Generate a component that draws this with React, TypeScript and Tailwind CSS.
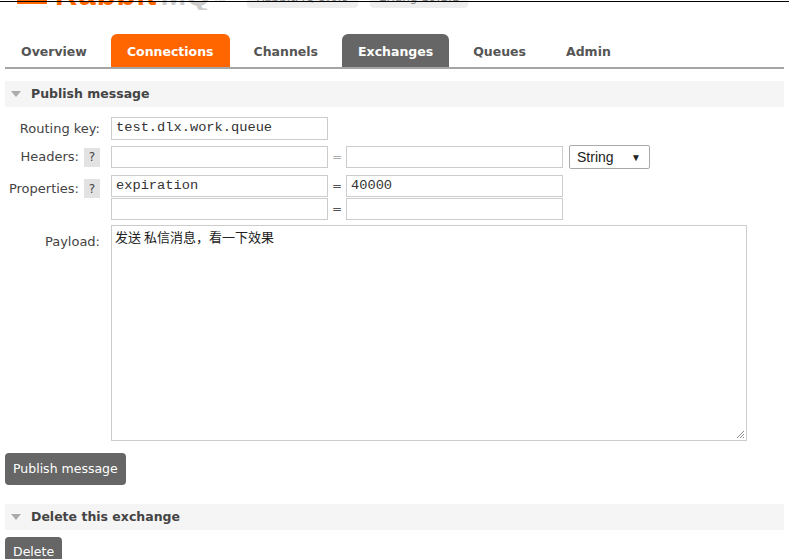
import React from "react";

const TABS = [
  { name: "Overview", kind: "plain" },
  { name: "Connections", kind: "orange" },
  { name: "Channels", kind: "plain" },
  { name: "Exchanges", kind: "dark" },
  { name: "Queues", kind: "plain" },
  { name: "Admin", kind: "plain" },
];

const ui = { fontFamily: '"DejaVu Sans", Verdana, sans-serif' };
const mono = { fontFamily: '"Liberation Mono", "Courier New", monospace' };
const arial = { fontFamily: '"Liberation Sans", Arial, sans-serif' };

function SectionBar({ title }: { title: string }) {
  return (
    <div className="flex items-center h-[26px] bg-[#f5f5f5]">
      <span className="ml-[6px] mr-[10px] w-0 h-0 border-l-[5px] border-r-[5px] border-t-[6px] border-l-transparent border-r-transparent border-t-[#aaa]" />
      <span className="font-bold text-[12.5px] text-[#444] pt-[1px]">{title}</span>
    </div>
  );
}

function Help() {
  return (
    <span className="ml-[5px] w-[16px] h-[19px] bg-[#e2e2e2] text-[#444] text-[12px] flex items-center justify-center">
      ?
    </span>
  );
}

function Field({ value = "", h = "h-[22px]" }: { value?: string; h?: string }) {
  return (
    <div
      className={`w-[217px] ${h} border border-[#ccc] bg-white px-[4px] flex items-center text-[13.7px] text-[#333]`}
      style={mono}
    >
      {value}
    </div>
  );
}

function Eq({ light }: { light?: boolean }) {
  return (
    <span className={`w-[18px] text-center text-[12px] ${light ? "text-[#aaa]" : "text-[#555]"}`}>=</span>
  );
}

export default function App() {
  return (
    <div className="w-[789px] h-[559px] overflow-hidden bg-white relative" style={ui}>
      {/* cropped header strip */}
      <div className="relative h-[10px] overflow-hidden">
        <div className="absolute left-0 right-0 top-[1px] h-[1px] bg-black z-10" />
        <div className="flex items-end h-[10px] pl-[17px]">
          <div className="w-[30px] h-[20px] bg-[#f60] mb-[6px]" />
          <span className="ml-[8px] text-[31px] leading-[31px] font-bold text-[#f60] tracking-[1px]" style={arial}>
            Rabbit
          </span>
          <span className="ml-[3px] text-[31px] leading-[31px] font-bold text-[#ccc]" style={arial}>
            MQ
          </span>
          <span className="ml-[3px] text-[8px] text-[#bbb] mb-[4px]">TM</span>
          <span className="ml-[22px] h-[22px] px-[9px] rounded-[4px] bg-[#eee] text-[#888] text-[12px] flex items-end pb-[2px] mb-[2px]">
            RabbitMQ 3.6.9
          </span>
          <span className="ml-[12px] h-[22px] px-[9px] rounded-[4px] bg-[#eee] text-[#888] text-[12px] flex items-end pb-[2px] mb-[2px]">
            Erlang 19.1.1
          </span>
        </div>
      </div>

      <div className="px-[5px]">
        {/* tabs */}
        <div className="mt-[24px] flex gap-[8px] border-b-[2px] border-[#a5a5a5]">
          {TABS.map((t) => (
            <div
              key={t.name}
              className={`h-[33px] px-[16px] pt-[3px] flex items-center rounded-t-[6px] font-bold text-[12.5px] ${
                t.kind === "orange"
                  ? "bg-[#f60] text-white"
                  : t.kind === "dark"
                  ? "bg-[#666] text-white"
                  : "text-[#555]"
              }`}
            >
              {t.name}
            </div>
          ))}
        </div>

        <div className="mt-[12px]">
          <SectionBar title="Publish message" />
        </div>

        {/* form */}
        <div className="text-[13px] text-[#444]">
          <div className="mt-[10px] flex items-center">
            <div className="w-[95px] text-right">Routing key:</div>
            <div className="ml-[11px]">
              <Field value="test.dlx.work.queue" h="h-[23px]" />
            </div>
          </div>

          <div className="mt-[6px] flex items-center h-[22px]">
            <div className="w-[95px] flex items-center justify-end">
              Headers:
              <Help />
            </div>
            <div className="ml-[11px] flex items-center">
              <Field />
              <Eq light />
              <Field />
              <div
                className="ml-[6px] w-[81px] h-[24px] border border-[#aaa] rounded-[2px] flex items-center justify-between pl-[7px] pr-[8px] text-[14px] text-[#222]"
                style={arial}
              >
                <span>String</span>
                <span className="text-[10px]">▼</span>
              </div>
            </div>
          </div>

          <div className="mt-[7px] flex items-start">
            <div className="w-[95px] flex items-center justify-end pt-[4px]">
              Properties:
              <Help />
            </div>
            <div className="ml-[11px] flex flex-col gap-[1px]">
              <div className="flex items-center">
                <Field value="expiration" />
                <Eq />
                <Field value="40000" />
              </div>
              <div className="flex items-center">
                <Field />
                <Eq />
                <Field />
              </div>
            </div>
          </div>

          <div className="mt-[5px] flex items-start">
            <div className="w-[95px] text-right pt-[7px]">Payload:</div>
            <div className="ml-[11px] relative w-[636px] h-[216px] border border-[#ccc] px-[3px] pt-[1px]">
              <span
                className="text-[13px] text-[#222]"
                style={{ fontFamily: '"Noto Sans CJK SC", "DejaVu Sans", sans-serif' }}
              >
                发送 私信消息，看一下效果
              </span>
              <svg className="absolute right-[1px] bottom-[1px]" width="9" height="9" viewBox="0 0 9 9">
                <path d="M8 1 L1 8 M8 4 L4 8 M8 7 L7 8" stroke="#888" strokeWidth="1" />
              </svg>
            </div>
          </div>
        </div>

        <button className="mt-[12px] h-[32px] px-[8px] rounded-[4px] bg-[#666] text-white text-[12.5px]">
          Publish message
        </button>

        <div className="mt-[19px]">
          <SectionBar title="Delete this exchange" />
        </div>

        <button className="mt-[7px] h-[30px] px-[8px] rounded-[4px] bg-[#666] text-white text-[12.5px]">
          Delete
        </button>
      </div>
    </div>
  );
}
